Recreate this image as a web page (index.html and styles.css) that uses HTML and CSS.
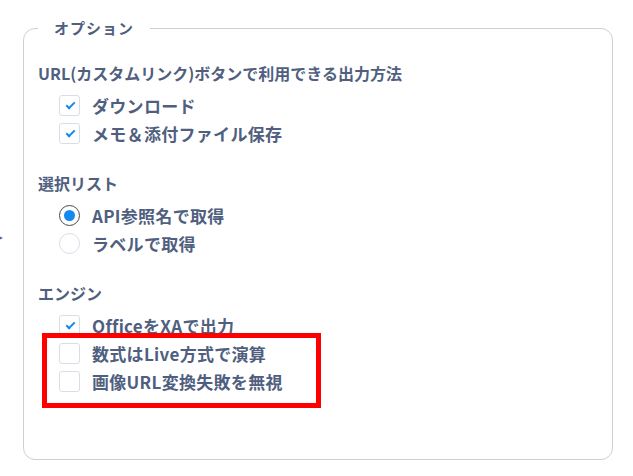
FILE: index.html
```html
<!DOCTYPE html>
<html lang="ja">
<head>
    <meta charset="UTF-8">
    <meta name="viewport" content="width=device-width, initial-scale=1.0">
    <title>オプション</title>
    <link rel="stylesheet" href="styles.css">
</head>
<body>
    <span class="edge-arrow"></span>
    <fieldset class="options">
        <legend>オプション</legend>

        <div class="group">
            <div class="group-title">URL(カスタムリンク)ボタンで利用できる出力方法</div>
            <label class="row"><span class="check checked"></span>ダウンロード</label>
            <label class="row"><span class="check checked"></span>メモ＆添付ファイル保存</label>
        </div>

        <div class="group">
            <div class="group-title">選択リスト</div>
            <label class="row"><span class="radio checked"></span>API参照名で取得</label>
            <label class="row"><span class="radio"></span>ラベルで取得</label>
        </div>

        <div class="group">
            <div class="group-title">エンジン</div>
            <label class="row"><span class="check checked"></span>OfficeをXAで出力</label>
            <div class="highlight">
                <label class="row"><span class="check"></span>数式はLive方式で演算</label>
                <label class="row"><span class="check"></span>画像URL変換失敗を無視</label>
            </div>
        </div>
    </fieldset>
</body>
</html>
```

FILE: styles.css
```css
body {
    margin: 0;
    background: #ffffff;
    font-family: "Noto Sans CJK JP", "Noto Sans", sans-serif;
    color: #505f80;
}
.edge-arrow {
    position: absolute;
    left: -3px;
    top: 235px;
    width: 0;
    height: 0;
    border-top: 3px solid transparent;
    border-bottom: 3px solid transparent;
    border-left: 6px solid #4a6aa0;
}
.options {
    margin: 18px 0 0 23px;
    width: 590px;
    height: 442px;
    box-sizing: border-box;
    padding: 25px 14px 0 14px;
    border: 1px solid #cfcfcf;
    border-radius: 12px;
}
.options legend {
    padding: 0 16px;
    font-size: 15px;
    line-height: 20px;
    font-weight: 700;
    letter-spacing: 1px;
}
.group {
    margin-bottom: 26px;
}
.group-title {
    font-size: 16px;
    line-height: 20px;
    font-weight: 700;
    margin-bottom: 8px;
}
.row {
    display: flex;
    align-items: center;
    height: 28px;
    padding-left: 21px;
    font-size: 17px;
    font-weight: 700;
    letter-spacing: 0.3px;
    gap: 12px;
}
.check {
    width: 21px;
    height: 21px;
    box-sizing: border-box;
    border: 1px solid #d8dde6;
    border-radius: 3px;
    background: #fff;
    position: relative;
}
.check.checked::after {
    content: "";
    position: absolute;
    left: 6px;
    top: 6px;
    width: 7px;
    height: 3px;
    border-left: 2px solid #1589ee;
    border-bottom: 2px solid #1589ee;
    transform: rotate(-45deg);
}
.radio {
    width: 21px;
    height: 21px;
    box-sizing: border-box;
    border: 1px solid #d8dde6;
    border-radius: 50%;
    background: #fff;
    display: flex;
    align-items: center;
    justify-content: center;
}
.radio.checked {
    border-color: #4a4a4a;
}
.radio.checked::after {
    content: "";
    width: 11px;
    height: 11px;
    border-radius: 50%;
    background: #1589ee;
}
.highlight {
    position: relative;
}
.highlight::after {
    content: "";
    position: absolute;
    left: 4px;
    right: 277px;
    top: -6px;
    bottom: -13px;
    border: 5px solid #ff0000;
}
```
